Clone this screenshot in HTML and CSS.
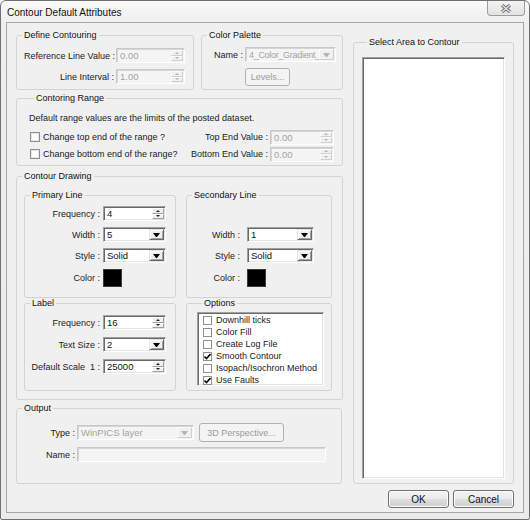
FILE: index.html
```html
<!DOCTYPE html>
<html lang="en">
<head>
  <meta charset="UTF-8" />
  <meta name="viewport" content="width=device-width, initial-scale=1.0"/>
  <title>Contour Default Attributes</title>
  <link rel="stylesheet" href="styles.css">
</head>
<body>
  <div class="window">
    <div class="titlebar">
      <span class="title">Contour Default Attributes</span>
      <div class="close-btn">
        <svg width="12" height="9" viewBox="0 0 12 9">
          <path d="M2 1 L10 8 M10 1 L2 8" stroke="#6a6a78" stroke-width="3.2" fill="none"/>
          <path d="M2 1 L10 8 M10 1 L2 8" stroke="#ececf0" stroke-width="1.2" fill="none"/>
        </svg>
      </div>
    </div>

    <div class="client">
      <div class="main">
        <div class="left-col">
          <div class="top-row">
            <fieldset class="grp define">
              <legend>Define Contouring</legend>
              <div class="define-grid">
                <label>Reference Line Value :</label>
                <div class="edit disabled">
                  <span class="val">0.00</span>
                  <span class="spin"><i class="up"></i><i class="down"></i></span>
                </div>
                <label>Line Interval :</label>
                <div class="edit disabled">
                  <span class="val">1.00</span>
                  <span class="spin"><i class="up"></i><i class="down"></i></span>
                </div>
              </div>
            </fieldset>

            <fieldset class="grp palette">
              <legend>Color Palette</legend>
              <div class="palette-grid">
                <label>Name :</label>
                <div class="combo disabled">
                  <span class="val">4_Color_Gradient_2</span>
                  <span class="drop"><i></i></span>
                </div>
                <span></span>
                <div class="btn disabled levels">Levels...</div>
              </div>
            </fieldset>
          </div>

          <fieldset class="grp range">
            <legend>Contoring Range</legend>
            <p class="note">Default range values are the limits of the posted dataset.</p>
            <div class="range-row">
              <span class="check"></span>
              <span class="check-label">Change top end of the range ?</span>
              <label class="end-label">Top End Value :</label>
              <div class="edit disabled end-edit">
                <span class="val">0.00</span>
                <span class="spin"><i class="up"></i><i class="down"></i></span>
              </div>
            </div>
            <div class="range-row second">
              <span class="check"></span>
              <span class="check-label">Change bottom end of the range?</span>
              <label class="end-label">Bottom End Value :</label>
              <div class="edit disabled end-edit">
                <span class="val">0.00</span>
                <span class="spin"><i class="up"></i><i class="down"></i></span>
              </div>
            </div>
          </fieldset>

          <fieldset class="grp drawing">
            <legend>Contour Drawing</legend>
            <div class="drawing-grid">
              <fieldset class="grp sub">
                <legend>Primary Line</legend>
                <div class="line-grid primary">
                  <label>Frequency :</label>
                  <div class="edit">
                    <span class="val">4</span>
                    <span class="spin"><i class="up"></i><i class="down"></i></span>
                  </div>
                  <label>Width :</label>
                  <div class="combo">
                    <span class="val">5</span>
                    <span class="drop"><i></i></span>
                  </div>
                  <label>Style :</label>
                  <div class="combo">
                    <span class="val">Solid</span>
                    <span class="drop"><i></i></span>
                  </div>
                  <label>Color :</label>
                  <span class="swatch"></span>
                </div>
              </fieldset>

              <fieldset class="grp sub">
                <legend>Secondary Line</legend>
                <div class="line-grid secondary">
                  <span></span>
                  <span></span>
                  <label>Width :</label>
                  <div class="combo">
                    <span class="val">1</span>
                    <span class="drop"><i></i></span>
                  </div>
                  <label>Style :</label>
                  <div class="combo">
                    <span class="val">Solid</span>
                    <span class="drop"><i></i></span>
                  </div>
                  <label>Color :</label>
                  <span class="swatch"></span>
                </div>
              </fieldset>

              <fieldset class="grp sub">
                <legend>Label</legend>
                <div class="line-grid label-grid">
                  <label>Frequency :</label>
                  <div class="edit">
                    <span class="val">16</span>
                    <span class="spin"><i class="up"></i><i class="down"></i></span>
                  </div>
                  <label>Text Size :</label>
                  <div class="combo">
                    <span class="val">2</span>
                    <span class="drop"><i></i></span>
                  </div>
                  <label>Default Scale &nbsp;1 :</label>
                  <div class="edit">
                    <span class="val">25000</span>
                    <span class="spin"><i class="up"></i><i class="down"></i></span>
                  </div>
                </div>
              </fieldset>

              <fieldset class="grp sub options">
                <legend>Options</legend>
                <ul class="check-list">
                  <li><span class="box"></span>Downhill ticks</li>
                  <li><span class="box"></span>Color Fill</li>
                  <li><span class="box"></span>Create Log File</li>
                  <li><span class="box checked"><svg width="7" height="7" viewBox="0 0 7 7"><path d="M0.5 3.5 L2.5 5.5 L6.5 1" stroke="#000" stroke-width="1.6" fill="none"/></svg></span>Smooth Contour</li>
                  <li><span class="box"></span>Isopach/Isochron Method</li>
                  <li><span class="box checked"><svg width="7" height="7" viewBox="0 0 7 7"><path d="M0.5 3.5 L2.5 5.5 L6.5 1" stroke="#000" stroke-width="1.6" fill="none"/></svg></span>Use Faults</li>
                </ul>
              </fieldset>
            </div>
          </fieldset>

          <fieldset class="grp output">
            <legend>Output</legend>
            <div class="out-row">
              <label>Type :</label>
              <div class="combo disabled type-combo">
                <span class="val">WinPICS layer</span>
                <span class="drop"><i></i></span>
              </div>
              <div class="btn disabled persp">3D Perspective...</div>
            </div>
            <div class="out-row name-row">
              <label>Name :</label>
              <div class="edit disabled name-edit"></div>
            </div>
          </fieldset>
        </div>

        <fieldset class="grp area">
          <legend>Select Area to Contour</legend>
          <div class="area-list"></div>
        </fieldset>
      </div>

      <div class="buttons">
        <div class="btn">OK</div>
        <div class="btn">Cancel</div>
      </div>
    </div>
  </div>
</body>
</html>
```

FILE: styles.css
```css
* {
  margin: 0;
  padding: 0;
  box-sizing: border-box;
}
body {
  background: #fff;
  font-family: "Liberation Sans", Arial, sans-serif;
  font-size: 9px;
  color: #1a1a1a;
}

/* WINDOW FRAME */
.window {
  width: 530px;
  height: 520px;
  border: 1px solid #707070;
  border-radius: 6px 6px 2px 2px;
  background: linear-gradient(to bottom, #fafafa 0, #eeeeee 22px, #ebebeb 100%);
}
.titlebar {
  display: flex;
  justify-content: space-between;
  align-items: flex-start;
  height: 21px;
}
.title {
  padding: 6px 0 0 6px;
  font-size: 10px;
  line-height: 12px;
  color: #111;
}
.close-btn {
  display: flex;
  justify-content: center;
  align-items: center;
  width: 38px;
  height: 15px;
  margin-right: 4px;
  border: 1px solid #9c9c9c;
  border-top: none;
  border-radius: 0 0 4px 4px;
  background: linear-gradient(to bottom, #f4f4f4, #e2e2e2);
}
.client {
  height: 491px;
  margin: 0 5px;
  padding: 7px 9px 0 9px;
  border: 1px solid #a7a7a7;
  background: #f0f0f0;
}
.main {
  display: flex;
  gap: 10px;
}
.left-col {
  width: 327px;
}

/* GROUP BOXES */
.grp {
  min-width: 0;
  border: 1px solid #d3d3d3;
  border-radius: 3px;
}
.grp legend {
  margin-left: 5px;
  padding: 0 2px;
  line-height: 11px;
  font-size: 9px;
  color: #111;
}
label {
  text-align: right;
  white-space: nowrap;
  color: #222;
}

.top-row {
  display: flex;
  gap: 7px;
  height: 60px;
}
.define {
  width: 178px;
  height: 60px;
}
.define-grid {
  display: grid;
  grid-template-columns: 90px 69px;
  grid-auto-rows: 15px;
  column-gap: 2px;
  row-gap: 6px;
  align-items: center;
  padding: 7px 0 0 7px;
}
.palette {
  width: 142px;
  height: 60px;
}
.palette-grid {
  display: grid;
  grid-template-columns: 41px 91px;
  grid-template-rows: 15px 18px;
  column-gap: 2px;
  row-gap: 6px;
  align-items: center;
  padding: 6px 0 0 0;
}
.palette-grid .val {
  font-size: 9px;
  letter-spacing: -0.3px;
}

.range {
  height: 73px;
  margin-top: 3px;
  padding: 0 8px 0 12px;
}
.note {
  margin-top: 8px;
  line-height: 13px;
}
.range-row {
  display: flex;
  align-items: center;
  height: 14px;
  margin-top: 5px;
}
.range-row.second {
  margin-top: 3px;
}
.check {
  width: 10px;
  height: 10px;
  margin-left: 1px;
  border: 1px solid #8e8f8f;
  background: #fff;
  box-shadow: inset 0 0 0 1px #e6e6e6;
}
.check-label {
  flex: 1;
  margin-left: 3px;
}
.end-label {
  width: 90px;
  margin-right: 2px;
}
.end-edit {
  width: 64px;
  height: 14px;
}

.drawing {
  height: 229px;
  margin-top: 5px;
}
.drawing-grid {
  display: grid;
  grid-template-columns: 152px 146px;
  grid-template-rows: 108px 93px;
  column-gap: 10px;
  padding: 8px 0 0 7px;
}
.line-grid {
  display: grid;
  grid-template-rows: 15px 15px 15px 18px;
  row-gap: 6px;
  column-gap: 3px;
  align-items: center;
  padding-top: 5px;
}
.primary {
  grid-template-columns: 75px 63px;
}
.secondary {
  grid-template-columns: 53px 67px;
  column-gap: 7px;
}
.label-grid {
  grid-template-columns: 75px 63px;
  grid-template-rows: 15px 15px 15px;
  row-gap: 7px;
  padding-top: 6px;
}
.swatch {
  width: 19px;
  height: 18px;
  background: #000;
  border: 1px solid #3a3a3a;
}
.options {
  padding-left: 10px;
}
.check-list {
  list-style: none;
  width: 127px;
  height: 74px;
  margin-top: 3px;
  padding: 1px 0 0 5px;
  background: #fff;
  border: 1px solid;
  border-color: #a0a0a0 #fff #fff #a0a0a0;
  box-shadow: inset 1px 1px 0 #696969, inset -1px -1px 0 #e3e3e3;
}
.check-list li {
  display: flex;
  align-items: center;
  height: 12px;
  line-height: 12px;
  white-space: nowrap;
}
.check-list .box {
  display: flex;
  justify-content: center;
  align-items: center;
  width: 9px;
  height: 9px;
  margin-right: 4px;
  border: 1px solid #8e8f8f;
  background: #fff;
}

.output {
  width: 326px;
  height: 81px;
  margin-top: 3px;
  padding-top: 9px;
}
.out-row {
  display: flex;
  align-items: center;
  height: 19px;
}
.out-row label {
  width: 58px;
  margin-right: 2px;
}
.type-combo {
  width: 117px;
}
.name-row {
  height: 15px;
  margin-top: 5px;
}
.name-edit {
  width: 249px;
}

.area {
  width: 161px;
  height: 447px;
  margin-top: 7px;
  padding: 9px 8px 4px 8px;
}
.area-list {
  height: 100%;
  background: #fff;
  border: 1px solid;
  border-color: #a0a0a0 #fff #fff #a0a0a0;
  box-shadow: inset 1px 1px 0 #696969, inset -1px -1px 0 #e3e3e3;
}

/* CONTROLS */
.edit,
.combo {
  display: flex;
  align-items: stretch;
  height: 15px;
  padding: 1px;
  background: #fff;
  border: 1px solid;
  border-color: #a0a0a0 #fff #fff #a0a0a0;
  box-shadow: inset 1px 1px 0 #696969, inset -1px -1px 0 #e3e3e3;
  overflow: hidden;
}
.val {
  flex: 1;
  padding-left: 2px;
  line-height: 12px;
  font-size: 9.5px;
  white-space: nowrap;
  overflow: hidden;
  color: #111;
}
.spin {
  display: flex;
  flex-direction: column;
  width: 12px;
}
.spin i {
  display: flex;
  flex: 1;
  justify-content: center;
  align-items: center;
  background: #f0f0f0;
  border: 1px solid;
  border-color: #fff #a0a0a0 #a0a0a0 #fff;
}
.spin i::after {
  content: "";
  border-left: 2px solid transparent;
  border-right: 2px solid transparent;
}
.spin .up::after {
  border-bottom: 2px solid #222;
}
.spin .down::after {
  border-top: 2px solid #222;
}
.drop {
  display: flex;
  justify-content: center;
  align-items: center;
  width: 15px;
  background: #f0f0f0;
  border: 1px solid;
  border-color: #e3e3e3 #696969 #696969 #e3e3e3;
  box-shadow: inset 1px 1px 0 #fff, inset -1px -1px 0 #a0a0a0;
}
.drop i {
  width: 1px;
  border-left: 3px solid transparent;
  border-right: 3px solid transparent;
  border-top: 4px solid #000;
  box-sizing: content-box;
}

.disabled {
  background: #f4f4f4;
  border-color: #c8c8c8 #fff #fff #c8c8c8;
  box-shadow: inset 1px 1px 0 #d6d6d6;
}
.disabled .val {
  color: #a3a3a3;
}
.disabled .spin i,
.disabled .drop {
  border-color: #fafafa #cfcfcf #cfcfcf #fafafa;
  box-shadow: none;
}
.disabled .spin .up::after {
  border-bottom-color: #b4b4b4;
}
.disabled .spin .down::after {
  border-top-color: #b4b4b4;
}
.disabled .drop i {
  border-top-color: #b4b4b4;
}

.buttons {
  display: flex;
  justify-content: flex-end;
  gap: 4px;
  margin-top: 6px;
}
.btn {
  display: flex;
  justify-content: center;
  align-items: center;
  width: 61px;
  height: 18px;
  border: 1px solid #707070;
  border-radius: 3px;
  background: linear-gradient(to bottom, #f2f2f2 0, #ebebeb 50%, #dddddd 50%, #cfcfcf 100%);
  box-shadow: inset 0 0 0 1px #fcfcfc;
  font-size: 10px;
  white-space: nowrap;
  color: #111;
}
.btn.disabled {
  border-color: #adb2b5;
  background: #f4f4f4;
  box-shadow: none;
  color: #9a9a9a;
  font-size: 9px;
}
.btn.levels {
  width: 45px;
}
.btn.persp {
  width: 85px;
  height: 19px;
  margin-left: 5px;
}
```
